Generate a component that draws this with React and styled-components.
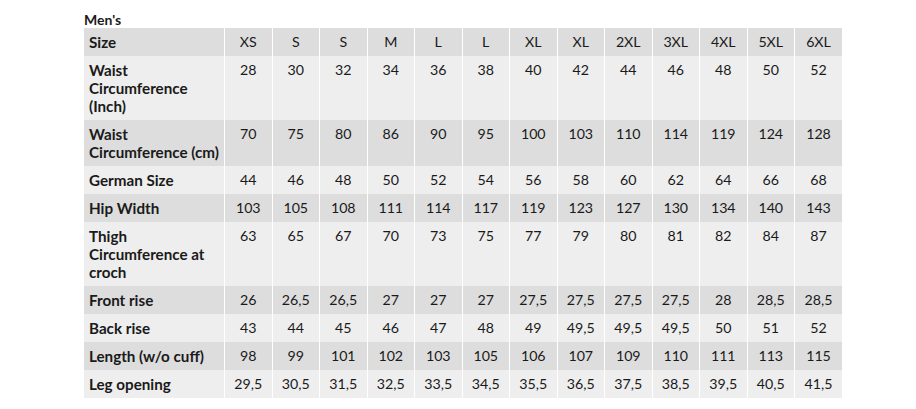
import React from 'react';
import styled, { createGlobalStyle } from 'styled-components';

const GlobalStyle = createGlobalStyle`
  body {
    margin: 0;
    background: #fff;
    font-family: Lato, "Open Sans", "Liberation Sans", sans-serif;
    color: #1a1a1a;
  }
`;

const sizes = ['XS', 'S', 'S', 'M', 'L', 'L', 'XL', 'XL', '2XL', '3XL', '4XL', '5XL', '6XL'];

const rows = [
  { label: ['Waist', 'Circumference', '(Inch)'], values: [28, 30, 32, 34, 36, 38, 40, 42, 44, 46, 48, 50, 52] },
  { label: ['Waist', 'Circumference (cm)'], values: [70, 75, 80, 86, 90, 95, 100, 103, 110, 114, 119, 124, 128] },
  { label: ['German Size'], values: [44, 46, 48, 50, 52, 54, 56, 58, 60, 62, 64, 66, 68] },
  { label: ['Hip Width'], values: [103, 105, 108, 111, 114, 117, 119, 123, 127, 130, 134, 140, 143] },
  { label: ['Thigh', 'Circumference at', 'croch'], values: [63, 65, 67, 70, 73, 75, 77, 79, 80, 81, 82, 84, 87] },
  { label: ['Front rise'], values: ['26', '26,5', '26,5', '27', '27', '27', '27,5', '27,5', '27,5', '27,5', '28', '28,5', '28,5'] },
  { label: ['Back rise'], values: ['43', '44', '45', '46', '47', '48', '49', '49,5', '49,5', '49,5', '50', '51', '52'] },
  { label: ['Length (w/o cuff)'], values: [98, 99, 101, 102, 103, 105, 106, 107, 109, 110, 111, 113, 115] },
  { label: ['Leg opening'], values: ['29,5', '30,5', '31,5', '32,5', '33,5', '34,5', '35,5', '36,5', '37,5', '38,5', '39,5', '40,5', '41,5'] },
];

const Page = styled.div`
  padding: 11px 0 0 84px;
`;

const Title = styled.div`
  font-size: 14px;
  font-weight: 700;
  line-height: 17px;
`;

const Table = styled.table`
  width: 758px;
  border-collapse: collapse;
  table-layout: fixed;
`;

const Row = styled.tr`
  background: ${(p) => (p.$dark ? '#dddddd' : '#eeeeee')};
`;

const LabelCell = styled.td`
  width: 131px;
  padding: 5px 4px 5px 5px;
  font-size: 15.2px;
  font-weight: 700;
  line-height: 18px;
  vertical-align: top;
  border-right: 1px solid #fff;
  white-space: nowrap;
`;

const ValueCell = styled.td`
  padding: 5px 0;
  font-size: 14.2px;
  line-height: 18px;
  text-align: center;
  vertical-align: top;
  border-right: 1px solid #fff;
  &:last-child {
    border-right: none;
  }
`;

const App = () => (
  <Page>
    <GlobalStyle />
    <Title>Men's</Title>
    <Table>
      <tbody>
        <Row $dark>
          <LabelCell>Size</LabelCell>
          {sizes.map((s, i) => (
            <ValueCell key={i}>{s}</ValueCell>
          ))}
        </Row>
        {rows.map((r, i) => (
          <Row key={i} $dark={i % 2 === 1}>
            <LabelCell>
              {r.label.map((line, j) => (
                <React.Fragment key={j}>
                  {j > 0 && <br />}
                  {line}
                </React.Fragment>
              ))}
            </LabelCell>
            {r.values.map((v, j) => (
              <ValueCell key={j}>{v}</ValueCell>
            ))}
          </Row>
        ))}
      </tbody>
    </Table>
  </Page>
);

export default App;
